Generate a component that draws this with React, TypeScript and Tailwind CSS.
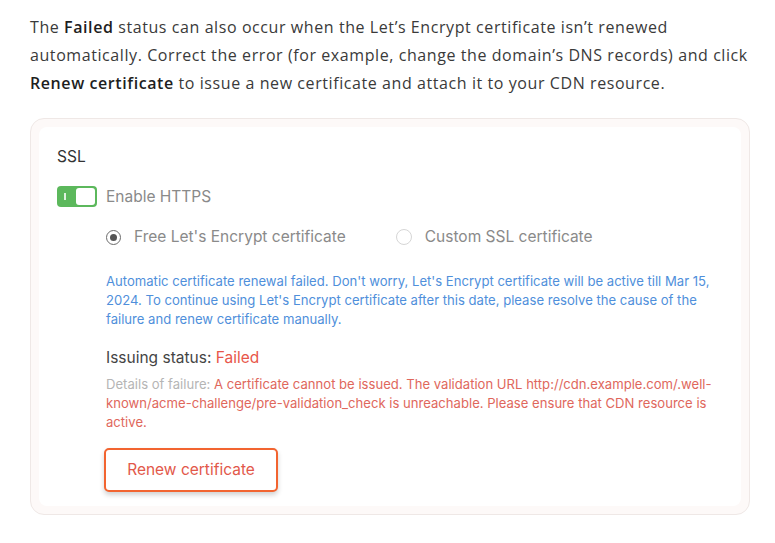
function Radio({ checked, label }: { checked?: boolean; label: string }) {
    return (
        <div className="flex items-center gap-[13px]">
            <span
                className={
                    checked
                        ? 'flex h-[15px] w-[15px] items-center justify-center rounded-full border-[1.5px] border-[#6b6b6b] bg-white'
                        : 'flex h-[16px] w-[16px] items-center justify-center rounded-full border border-[#d6d6d6] bg-white'
                }
            >
                {checked && <span className="h-[7px] w-[7px] rounded-full bg-[#555]" />}
            </span>
            <span className="text-[15.5px] leading-[20px] text-[#8a8a8a]">{label}</span>
        </div>
    )
}

export default function App() {
    return (
        <div className="min-h-[543px] w-[775px] bg-white px-[30px] pt-[13px]">
            <p
                className="whitespace-nowrap text-[16px] leading-[28px] tracking-[0.58px] text-[#3a3a3a]"
                style={{ fontFamily: '"Open Sans", Lato, sans-serif' }}
            >
                The <b className="font-semibold text-[#1e1e1e]">Failed</b> status can also occur when the Let’s Encrypt certificate isn’t renewed
                <br />
                automatically. Correct the error (for example, change the domain’s DNS records) and click
                <br />
                <b className="font-semibold text-[#1e1e1e]">Renew certificate</b> to issue a new certificate and attach it to your CDN resource.
            </p>

            <div className="mt-[21px] w-[720px] rounded-[14px] border border-[#efe8e6] bg-[#fdf9f8] p-[8px]">
                <div
                    className="h-[379px] rounded-[8px] bg-white pl-[18px] pt-[20px]"
                    style={{ fontFamily: 'Inter, "Liberation Sans", sans-serif' }}
                >
                    <div className="text-[15.5px] leading-[20px] text-[#333]">SSL</div>

                    <div className="mt-[19px] flex items-center gap-[9px]">
                        <div className="flex h-[21px] w-[40px] items-center justify-between rounded-[4px] bg-[#5cb85c] p-[2px]">
                            <span className="ml-[5px] h-[7px] w-[1.5px] bg-white/80" />
                            <span className="h-[17px] w-[19px] rounded-[3px] bg-white" />
                        </div>
                        <span className="text-[15.5px] leading-[20px] text-[#8a8a8a]">Enable HTTPS</span>
                    </div>

                    <div className="ml-[49px] mt-[20px] flex items-center gap-[50px]">
                        <Radio checked label="Free Let's Encrypt certificate" />
                        <Radio label="Custom SSL certificate" />
                    </div>

                    <div className="ml-[49px] w-[625px]">
                        <p className="mt-[25px] text-[13.1px] leading-[19px] text-[#4f8fdb]">
                            Automatic certificate renewal failed. Don't worry, Let's Encrypt certificate will be active till Mar 15,
                            2024. To continue using Let's Encrypt certificate after this date, please resolve the cause of the
                            failure and renew certificate manually.
                        </p>

                        <div className="mt-[19px] text-[15.5px] leading-[20px] text-[#444]">
                            Issuing status: <span className="text-[#e8564a]">Failed</span>
                        </div>

                        <p className="mt-[7px] text-[13.1px] leading-[19px]">
                            <span className="text-[#b5b5b5]">Details of failure:</span>{' '}
                            <span className="text-[#e0675c]">
                                A certificate cannot be issued. The validation URL http://cdn.example.com/.well-known/acme-challenge/pre-validation_check is unreachable. Please ensure that CDN resource is
                                active.
                            </span>
                        </p>

                        <button className="-ml-[2px] mt-[16px] flex h-[44px] w-[174px] items-center justify-center rounded-[5px] border-2 border-[#f26430] bg-white text-[15.5px] text-[#e2584a] shadow-[0_3px_5px_rgba(0,0,0,0.18)]">
                            Renew certificate
                        </button>
                    </div>
                </div>
            </div>
        </div>
    )
}
